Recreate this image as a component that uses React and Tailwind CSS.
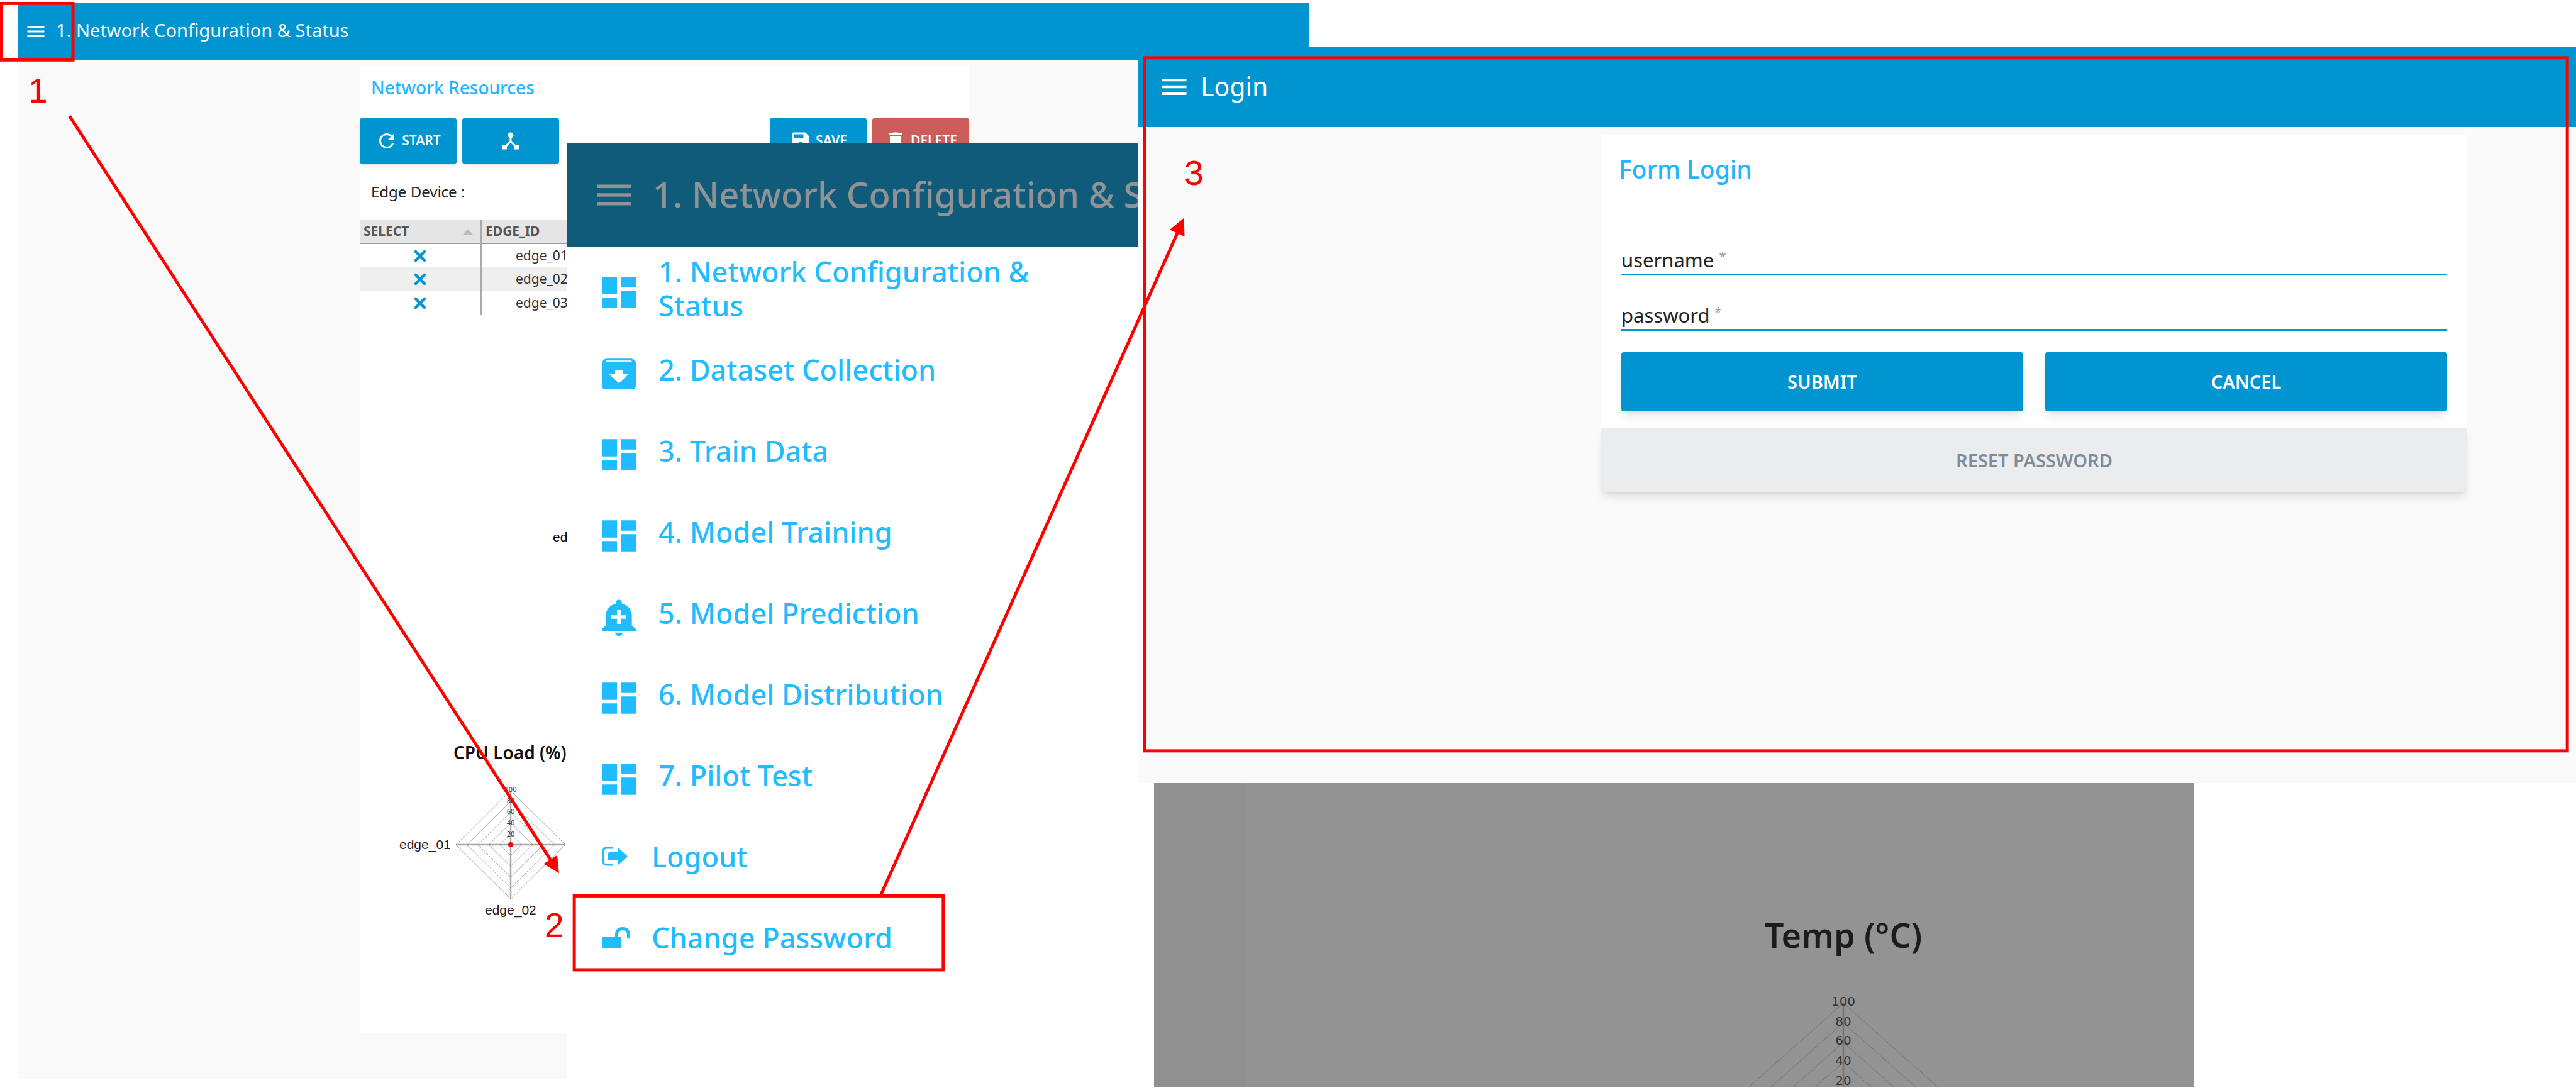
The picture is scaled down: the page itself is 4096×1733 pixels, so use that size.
import { MdMenu, MdDashboard, MdAddAlert, MdRefresh, MdDeviceHub, MdSave, MdDelete } from "react-icons/md";

const stretch = { preserveAspectRatio: "none" };

function ArchiveIcon(props) {
  return (
    <svg viewBox="0 0 24 24" fill="currentColor" aria-hidden="true" {...props}>
      <path d="M5 3H19L21 5.200V19Q21 21 19 21H5Q3 21 3 19V5.200Z" />
      <path d="M5.600 4H18.400L19 5.100H5Z" fill="#fff" fillOpacity="0.8" />
      <path d="M10 10H14V12H17.500L12 17.500L6.500 12H10Z" fill="#fff" />
    </svg>
  );
}

function LogoutIcon() {
  return (
    <svg viewBox="0 0 42 31" className="h-[31px] w-[42px]" fill="none" aria-hidden="true">
      <path d="M17 2H8Q2 2 2 8V23Q2 29 8 29H17" stroke="currentColor" strokeWidth="3" />
      <path d="M12 9H25V1L41 15.500L25 30V22H12Q10 22 10 20V11Q10 9 12 9Z" fill="currentColor" />
    </svg>
  );
}

function UnlockIcon() {
  return (
    <svg viewBox="0 0 46 36" className="h-[36px] w-[46px]" fill="none" aria-hidden="true">
      <rect x="0" y="17" width="31" height="18" rx="2" fill="currentColor" />
      <path d="M23.500 18V13Q23.500 3.500 33 3.500Q42.500 3.500 42.500 13V17" stroke="currentColor" strokeWidth="5" strokeLinecap="round" />
    </svg>
  );
}

function CrossIcon() {
  return (
    <svg viewBox="0 0 20 20" className="mx-auto size-5" fill="none" aria-label="not selected">
      <path d="M3 3L17 17M17 3L3 17" stroke="#0094d0" strokeWidth="4.500" strokeLinecap="round" />
    </svg>
  );
}

function Radar({ cx, cy, rx, ry }) {
  return (
    <g stroke="#555" fill="none">
      {[0.2, 0.4, 0.6, 0.8, 1].map((s) => (
        <path
          key={s}
          strokeOpacity="0.5"
          d={`M${cx} ${cy - ry * s}L${cx + rx * s} ${cy}L${cx} ${cy + ry * s}L${cx - rx * s} ${cy}Z`}
        />
      ))}
      <path strokeOpacity="0.5" strokeWidth="2.500" d={`M${cx} ${cy - ry}V${cy + ry}M${cx - rx} ${cy}H${cx + rx}`} />
    </g>
  );
}

function CpuChart() {
  return (
    <svg viewBox="0 0 300 230" className="ml-[60px] h-[230px] w-[300px]">
      <Radar cx={180} cy={108} rx={87} ry={86} />
      <circle cx="180" cy="108" r="4" fill="#f00" />
      <g fontFamily="DejaVu Sans, sans-serif" fontSize="10" textAnchor="middle" fill="#333">
        <text x="180" y="24">100</text>
        <text x="180" y="42">80</text>
        <text x="180" y="59">60</text>
        <text x="180" y="77">40</text>
        <text x="180" y="95">20</text>
      </g>
      <g fontFamily="Liberation Sans, sans-serif" fontSize="21" fill="#222">
        <text x="3" y="115">edge_01</text>
        <text x="139" y="219">edge_02</text>
      </g>
    </svg>
  );
}

function TempChart() {
  return (
    <svg viewBox="0 0 800 148" className="h-[148px] w-[800px]">
      <Radar cx={400} cy={170} rx={176} ry={156} />
      <g fontFamily="DejaVu Sans, sans-serif" fontSize="20" textAnchor="middle" fill="#333">
        <text x="400" y="18">100</text>
        <text x="400" y="50">80</text>
        <text x="400" y="80">60</text>
        <text x="400" y="112">40</text>
        <text x="400" y="144">20</text>
      </g>
    </svg>
  );
}

function ToolButton({ icon: Icon, children, label, danger }) {
  return (
    <button
      aria-label={label}
      className={
        "flex h-[72px] w-[154px] items-center justify-center gap-[6px] rounded-[3px] text-[21px] font-semibold text-white shadow-md " +
        (danger ? "bg-[#cd5c5c]" : "bg-[#0094d0]")
      }
    >
      <Icon className="size-9" />
      {children}
    </button>
  );
}

function NetworkWindow() {
  return (
    <section className="absolute top-1 bottom-[18px] left-7 flex w-[calc(50%+6px)] flex-col bg-[#fafafa]">
      <header className="flex h-[92px] shrink-0 items-center gap-[14px] bg-[#0094d0] pl-[11px] text-white">
        <button aria-label="Open menu">
          <MdMenu className="size-[36px]" />
        </button>
        <h1 className="pb-1 text-[29px]">1. Network Configuration &amp; Status</h1>
      </header>
      <main className="mt-[9px] mb-[72px] ml-[544px] flex w-[969px] grow flex-col bg-white">
        <h2 className="px-[18px] pt-[14px] text-[28px] leading-10 font-medium text-[#1fb6ff]">Network Resources</h2>
        <div className="mt-[29px] flex gap-[9px]">
          <ToolButton icon={MdRefresh}>START</ToolButton>
          <ToolButton icon={MdDeviceHub} label="Topology" />
          <span className="grow" />
          <ToolButton icon={MdSave}>SAVE</ToolButton>
          <ToolButton icon={MdDelete} danger>DELETE</ToolButton>
        </div>
        <p className="mt-[29px] px-[18px] text-[24px] leading-8 text-[#222]">Edge Device :</p>
        <table className="mt-[29px] w-full table-fixed border-collapse text-[21px] text-[#333]">
          <thead>
            <tr className="h-[37px] border-b-2 border-[#999] bg-[#e5e5e5] text-[#555]">
              <th className="w-[193px] border-r-2 border-[#aaa] px-[6px] font-bold">
                <span className="flex items-center justify-between">
                  SELECT
                  <svg viewBox="0 0 16 9" className="mr-[6px] h-[9px] w-4" fill="#bbb"><path d="M8 0L16 9H0Z" /></svg>
                </span>
              </th>
              <th className="px-[6px] text-left font-bold">EDGE_ID</th>
            </tr>
          </thead>
          <tbody>
            {["edge_01", "edge_02", "edge_03"].map((id) => (
              <tr key={id} className="h-[38px] even:bg-[#efefef]">
                <td className="border-r-2 border-[#aaa]"><CrossIcon /></td>
                <td className="pl-[54px]">{id}</td>
              </tr>
            ))}
          </tbody>
        </table>
        <p className="mt-[337px] pl-[307px] font-['Liberation_Sans',sans-serif] text-[21px] leading-8">edge_03</p>
        <h3 className="mt-[306px] pl-[149px] text-[28px] leading-10 font-semibold text-[#111]">CPU Load (%)</h3>
        <div className="mt-[19px]"><CpuChart /></div>
      </main>
    </section>
  );
}

const MENU = [
  [MdDashboard, "1. Network Configuration & Status"],
  [ArchiveIcon, "2. Dataset Collection"],
  [MdDashboard, "3. Train Data"],
  [MdDashboard, "4. Model Training"],
  [MdAddAlert, "5. Model Prediction"],
  [MdDashboard, "6. Model Distribution"],
  [MdDashboard, "7. Pilot Test"],
];

function MenuWindow() {
  return (
    <section className="absolute top-[227px] right-[607px] bottom-1 left-[902px] flex flex-col bg-white">
      <header className="flex h-[166px] shrink-0 items-center gap-[26px] bg-[#105b79] pl-[38px] text-[#8f9395]">
        <button aria-label="Close menu">
          <MdMenu className="h-[66px] w-[72px]" {...stretch} />
        </button>
        <p className="pb-1 text-[56px] font-medium whitespace-nowrap">1. Network Configuration &amp; S</p>
      </header>
      <div className="flex grow">
        <nav className="w-[933px] shrink-0 pt-px text-[45px] leading-[54px] font-medium text-[#1fbcff]">
          {MENU.map(([Icon, label]) => (
            <a key={label} href="#" className="flex h-[129px] items-center gap-[27px] pl-[46px]">
              <Icon className="mt-3 h-[66px] w-[72px]" {...stretch} />
              <span className="w-[620px]">{label}</span>
            </a>
          ))}
          <a href="#" className="flex h-[129px] items-center gap-[33px] pl-[55px]">
            <span className="flex w-[46px] shrink-0"><LogoutIcon /></span>
            Logout
          </a>
          <a href="#" className="flex h-[129px] items-center gap-[33px] pl-[55px]">
            <span className="flex w-[46px] shrink-0"><UnlockIcon /></span>
            Change Password
          </a>
        </nav>
        <div className="w-[146px] shrink-0 bg-[#909090]" />
        <div className="flex grow flex-col items-center justify-end bg-[#939393] pl-[392px]">
          <h3 className="text-[54px] leading-[60px] font-semibold text-[#1c1c1c]">Temp (°C)</h3>
          <div className="mt-[65px]"><TempChart /></div>
        </div>
      </div>
    </section>
  );
}

function Field({ id, type }) {
  return (
    <div className="flex h-[50px] items-center gap-2 border-b-[3px] border-[#0094d0] pt-1 text-[31px]">
      <label htmlFor={id} className="text-[#222]">
        {id} <sup className="text-[20px] text-[#999]">*</sup>
      </label>
      <input id={id} type={type} required className="min-w-0 grow bg-transparent outline-none" />
    </div>
  );
}

function LoginWindow() {
  return (
    <section className="absolute top-[74px] right-0 left-[1809px] flex h-[1171px] flex-col bg-[#fafafa]">
      <header className="flex h-[128px] items-center gap-4 bg-[#0094d0] pl-[32px] text-white">
        <button aria-label="Open menu">
          <MdMenu className="h-[52px] w-[52px]" />
        </button>
        <h1 className="text-[41px]">Login</h1>
      </header>
      <form className="mt-[13px] mr-[173px] ml-[737px]" onSubmit={(e) => e.preventDefault()}>
        <div className="bg-white px-8 pt-[29px] pb-[26px]">
          <h2 className="-ml-1 text-[39px] leading-[50px] font-medium text-[#1fb6ff]">Form Login</h2>
          <div className="mt-[94px] flex flex-col gap-[38px]">
            <Field id="username" type="text" />
            <Field id="password" type="password" />
          </div>
          <div className="mt-[34px] grid grid-cols-2 gap-[35px] text-[29px] font-semibold text-white">
            <button type="submit" className="h-[94px] rounded-[4px] bg-[#0094d0] shadow-lg">SUBMIT</button>
            <button type="button" className="h-[94px] rounded-[4px] bg-[#0094d0] shadow-lg">CANCEL</button>
          </div>
        </div>
        <button type="button" className="h-[103px] w-full rounded-[4px] bg-[#ebecee] text-[29px] font-semibold text-[#7f8c9a] shadow-lg">
          RESET PASSWORD
        </button>
      </form>
    </section>
  );
}

function Annotations() {
  return (
    <div className="pointer-events-none absolute inset-0 font-['Liberation_Sans',sans-serif] text-[55px] leading-none text-[#f00]">
      <svg viewBox="0 0 4147 1755" className="size-full" preserveAspectRatio="none" fill="none" stroke="#f00" strokeWidth="5">
        <rect x="2.500" y="5.500" width="115" height="91" />
        <rect x="924.500" y="1442.500" width="594" height="119" />
        <rect x="1843" y="93" width="2290" height="1116" />
        <path d="M112 187L888 1387M1418 1441L1896 374" />
        <path stroke="none" fill="#f00" d="M900 1406L875 1391L897 1377ZM1906 351L1883 370L1907 381Z" />
      </svg>
      <span className="absolute top-[117px] left-[45px]">1</span>
      <span className="absolute top-[1444px] left-[866px]">2</span>
      <span className="absolute top-[248px] left-[1883px]">3</span>
    </div>
  );
}

export default function App() {
  return (
    <div className="relative h-screen w-full overflow-hidden bg-white font-['Noto_Sans',sans-serif]">
      <NetworkWindow />
      <MenuWindow />
      <LoginWindow />
      <Annotations />
    </div>
  );
}
